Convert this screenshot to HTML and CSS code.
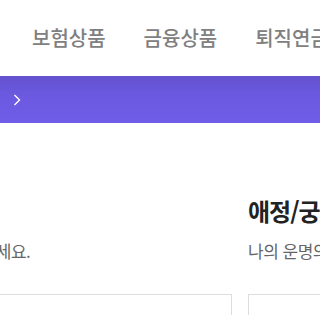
FILE: index.html
```html
<!DOCTYPE html>
<html lang="ko">
<head>
    <meta charset="UTF-8">
    <meta name="viewport" content="width=device-width, initial-scale=1.0">
    <title>운세 서비스</title>
    <link rel="stylesheet" href="styles.css">
</head>
<body>
    <div class="page">
        <nav class="gnb">
            <a class="gnb-item" href="#">보험상품</a>
            <a class="gnb-item" href="#">금융상품</a>
            <a class="gnb-item" href="#">퇴직연금</a>
            <a class="gnb-item" href="#">고객센터</a>
        </nav>

        <div class="banner">
            <button class="banner-btn" type="button" aria-label="다음">
                <svg width="8" height="12" viewBox="0 0 8 12" fill="none">
                    <path d="M1.5 1 L6.5 6 L1.5 11" stroke="#fff" stroke-width="1.4"/>
                </svg>
            </button>
        </div>

        <div class="fortune-track">
            <div class="fortune-col">
                <h2 class="fortune-title">토정비결</h2>
                <p class="fortune-desc">올해의 운세를 확인하세요.</p>
                <div class="fortune-card"></div>
            </div>
            <div class="fortune-col">
                <h2 class="fortune-title">애정/궁합</h2>
                <p class="fortune-desc">나의 운명의 상대를 찾아보세요.</p>
                <div class="fortune-card"></div>
            </div>
        </div>
    </div>
</body>
</html>
```

FILE: styles.css
```css
* {
    margin: 0;
    padding: 0;
    box-sizing: border-box;
}

body {
    font-family: "Noto Sans CJK KR", "Noto Sans", sans-serif;
    background: #fff;
    color: #222;
    overflow: hidden;
}

.page {
    width: 320px;
    height: 315px;
    overflow: hidden;
}

.gnb {
    display: flex;
    align-items: center;
    gap: 38px;
    height: 76px;
    padding-left: 32px;
    white-space: nowrap;
}

.gnb-item {
    font-size: 20px;
    line-height: 1;
    font-weight: 500;
    color: #808080;
    text-decoration: none;
    flex-shrink: 0;
}

.banner {
    height: 47px;
    background: linear-gradient(180deg, #6452cf 0%, #6b59e0 40%, #705de8 100%);
    display: flex;
    align-items: center;
    padding-left: 12px;
}

.banner-btn {
    display: flex;
    align-items: center;
    justify-content: center;
    width: 10px;
    height: 14px;
    border: none;
    background: none;
    cursor: pointer;
}

.fortune-track {
    display: flex;
    gap: 16px;
    margin-left: -149px;
    padding-top: 73px;
}

.fortune-col {
    flex: 0 0 381px;
    display: flex;
    flex-direction: column;
}

.fortune-title {
    font-size: 24px;
    font-weight: 700;
    line-height: 30px;
    letter-spacing: -1px;
    color: #222;
    white-space: nowrap;
}

.fortune-desc {
    margin-top: 13px;
    font-size: 17px;
    line-height: 24px;
    letter-spacing: -0.5px;
    color: #666;
    white-space: nowrap;
}

.fortune-card {
    margin-top: 31px;
    height: 120px;
    border: 1px solid #ddd;
}
```
